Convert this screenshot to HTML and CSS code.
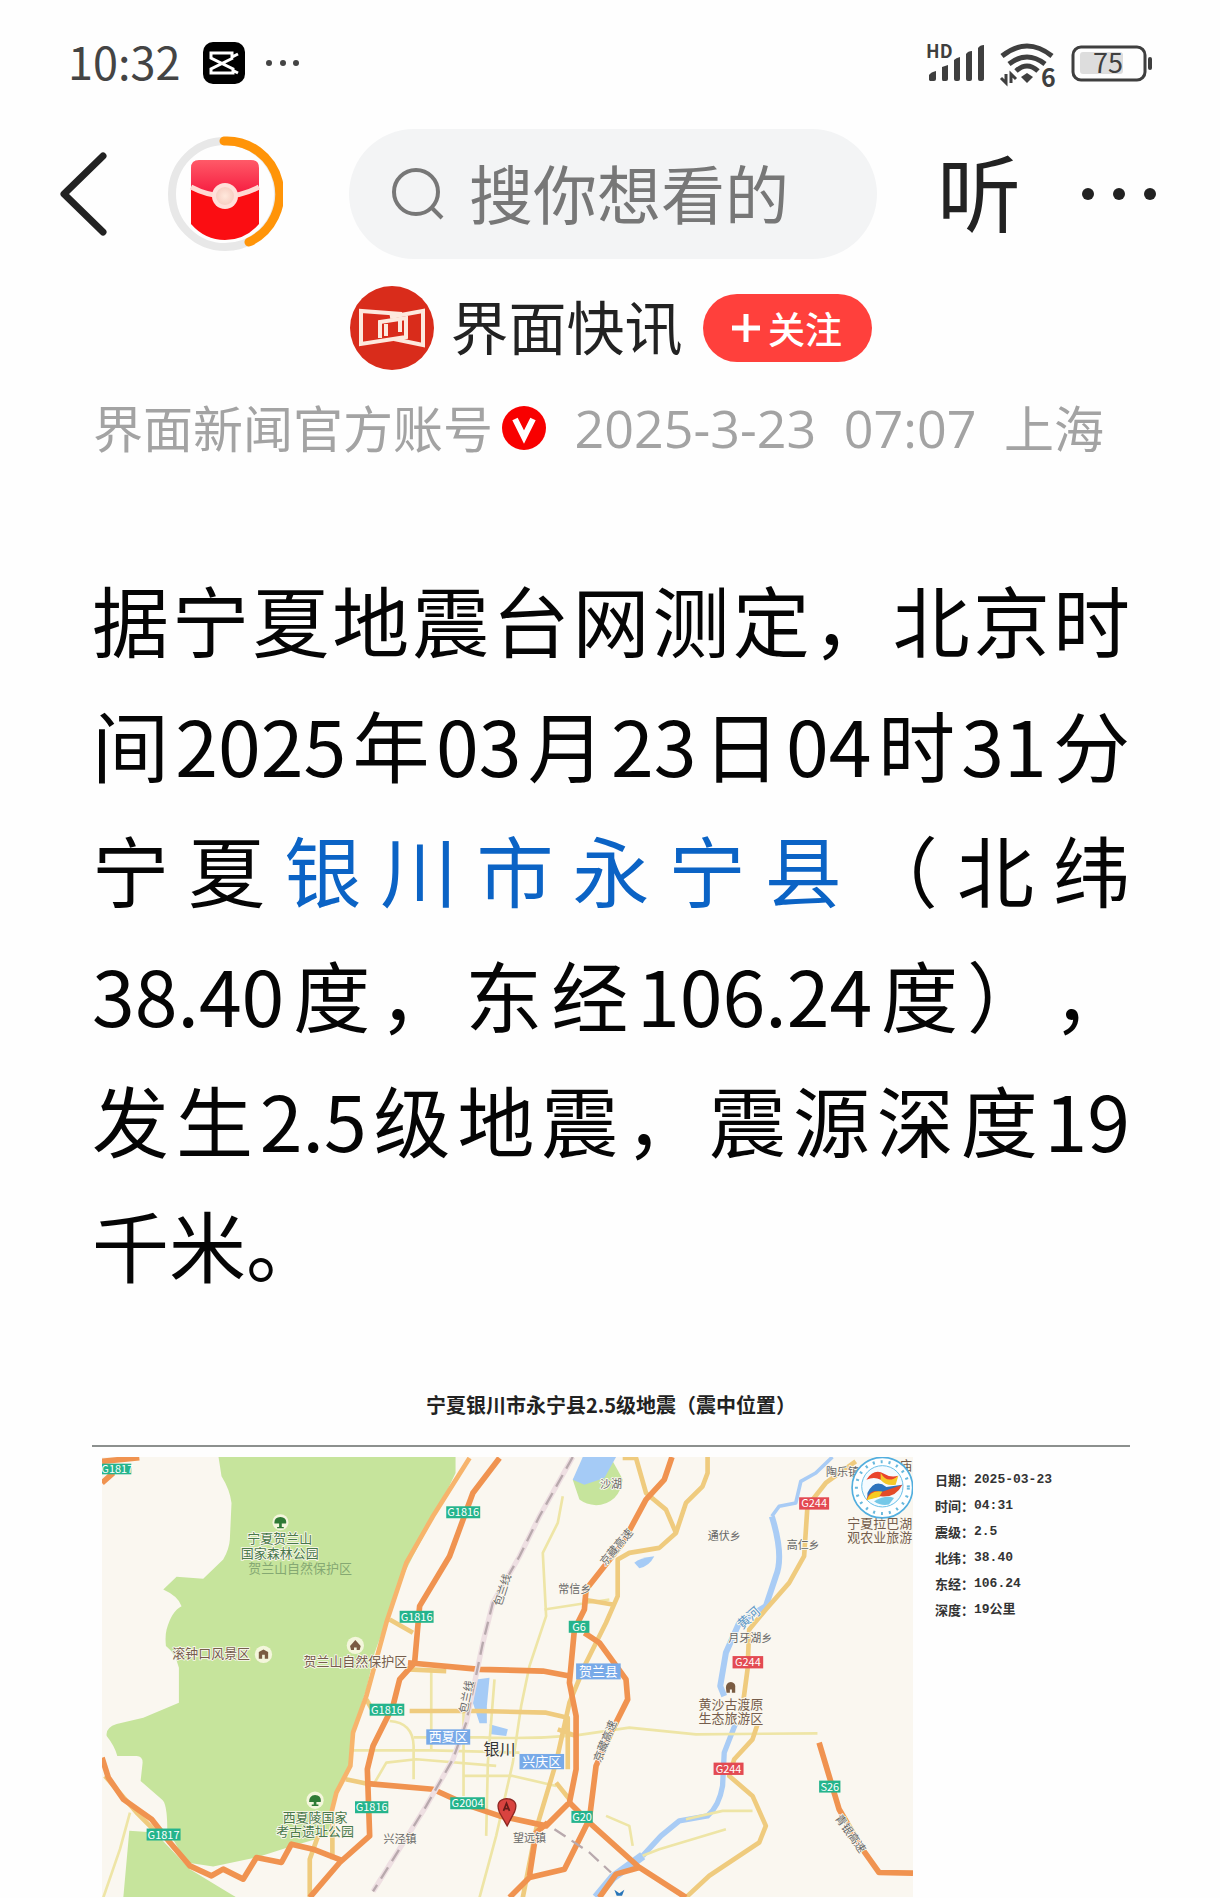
FILE: index.html
```html
<!DOCTYPE html>
<html lang="zh-CN">
<head>
<meta charset="utf-8">
<meta name="viewport" content="width=device-width, initial-scale=1">
<title>界面快讯</title>
<link rel="stylesheet" href="styles.css">
</head>
<body>
<div class="status">
  <span class="clock">10:32</span>
  <svg class="app" viewBox="0 0 42 42" aria-hidden="true"><rect width="42" height="42" rx="10"/><path d="M35 12 L29 15 V11 H8 V16 L30 27 V31 H8 V27 L30 16 M29 28 L35 31" fill="none" stroke="#fff" stroke-width="3"/></svg>
  <svg class="more-small" viewBox="0 0 36 8" aria-hidden="true"><circle cx="4" cy="4" r="3"/><circle cx="18" cy="4" r="3"/><circle cx="31" cy="4" r="3"/></svg>
  <svg class="signals" viewBox="0 0 228 54" role="img" aria-label="信号与电量">
    <g fill="#3f3f3f">
      <text x="1" y="22" font-size="18" font-weight="700">HD</text>
      <path d="M4 44V39Q6 36 11 35V43Q11 45 9 45H5ZM17 31L23 29V43Q23 45 21 45H18Q17 45 17 43ZM29 24Q31 22 35 21V43Q35 45 33 45H31Q29 45 29 43ZM41 18Q43 15 47 15V43Q47 45 45 45H43Q41 45 41 43ZM53 12Q55 9 59 9V43Q59 45 57 45H55Q53 45 53 43Z"/>
      <path d="M102 37L108 41 102 47 96 41Z"/>
      <path d="M81 38V47L76 42M86 47V38L91 43" fill="none" stroke="#3f3f3f" stroke-width="3"/>
      <g fill="none" stroke="#3f3f3f" stroke-width="5"><path d="M77 20Q102 0 127 20"/><path d="M84 28Q102 14 120 28"/><path d="M91 35Q102 25 113 35"/></g>
      <text x="116" y="51" font-size="25" font-weight="700">6</text>
      <rect x="148" y="11" width="72" height="33" rx="8" fill="none" stroke="#3f3f3f" stroke-width="3"/>
      <rect x="155" y="16" width="43" height="22" rx="3" fill="#ddd"/>
      <text x="183" y="37" font-size="27" text-anchor="middle">75</text>
      <rect x="223" y="21" width="4" height="13" rx="2"/>
    </g>
  </svg>
</div>

<header class="nav">
  <button class="back" aria-label="返回"><svg viewBox="0 0 48 84"><path d="M44 4L5 42 44 80" fill="none" stroke="#222" stroke-width="7" stroke-linecap="round" stroke-linejoin="round"/></svg></button>
  <button class="packet" aria-label="红包"><svg viewBox="0 0 116 116">
    <defs>
      <linearGradient id="flap" x1="0" y1="0" x2="0" y2="1"><stop offset="0" stop-color="#ff5a68"/><stop offset="1" stop-color="#f5163c"/></linearGradient>
      <radialGradient id="seal"><stop offset="0" stop-color="#ffe8dc"/><stop offset="1" stop-color="#f7d0c4"/></radialGradient>
    </defs>
    <circle cx="58" cy="58" r="53" fill="none" stroke="#e8e8e8" stroke-width="8"/>
    <path d="M57 5A53 53 0 0 1 82 106" fill="none" stroke="#ff9408" stroke-width="9" stroke-linecap="round"/>
    <path d="M24 50H92V88Q78 104 58 104T24 88Z" fill="#fb0d12"/>
    <path d="M24 54V32Q24 24 32 24H84Q92 24 92 32V54Q58 68 24 54Z" fill="url(#flap)"/>
    <path d="M24 51Q58 69 92 51" fill="none" stroke="#ffd9d2" stroke-width="5"/>
    <circle cx="58" cy="60" r="13" fill="#ffe0da"/><circle cx="58" cy="60" r="9" fill="url(#seal)"/>
  </svg></button>
  <label class="search">
    <svg viewBox="0 0 54 54" aria-hidden="true"><circle cx="25" cy="25" r="22" fill="none" stroke="#777" stroke-width="4"/><path d="M40 40L51 51" stroke="#777" stroke-width="4"/></svg>
    <input type="text" placeholder="搜你想看的" aria-label="搜索">
  </label>
  <button class="listen">听</button>
  <button class="more" aria-label="更多"><svg viewBox="0 0 76 14"><circle cx="7" cy="7" r="6"/><circle cx="38" cy="7" r="6"/><circle cx="69" cy="7" r="6"/></svg></button>
</header>

<main>
  <div class="author">
    <svg class="avatar" viewBox="0 0 84 84" role="img" aria-label="界面"><circle cx="42" cy="42" r="42" fill="#d92c1b"/>
      <g fill="none" stroke="#fde9de" stroke-width="4"><path d="M52 28L11 25V58L56 51V32L30 36V52"/><path d="M40 31L73 25V59L44 53M36 50V38M50 34V46"/></g></svg>
    <span class="name">界面快讯</span>
    <button class="follow"><svg viewBox="0 0 28 28" aria-hidden="true"><path d="M14 0V28M0 14H28" stroke="#fff" stroke-width="5"/></svg><span>关注</span></button>
  </div>
  <div class="meta">
    <span class="account"><span>界面新闻官方账号</span><svg viewBox="0 0 46 46" role="img" aria-label="认证"><circle cx="23" cy="23" r="22" fill="#f80000"/><path d="M14 14L23 32 32 14" fill="none" stroke="#fff" stroke-width="6"/></svg></span>
    <span class="num">2025-3-23</span><span class="num">07:07</span><span>上海</span>
  </div>

  <p class="story">据宁夏地震台网测定，北京时间2025年03月23日04时31分宁夏<a href="#map">银川市永宁县</a>（北纬38.40度，东经106.24度），发生2.5级地震，震源深度19千米。</p>

  <figure id="map">
    <figcaption>宁夏银川市永宁县2.5级地震（震中位置）</figcaption>
    <div class="panel">
      <svg class="chart" viewBox="66 262 2436 1323" role="img" aria-label="震中位置地图">
        <rect x="66" y="262" width="2436" height="1323" fill="#faf7f0"/>
        <g fill="#c6e49c">
          <path d="M416 262H1128V310L1080 410 1000 560 950 660 925 740 885 850 860 960 820 1080 812 1180 770 1270 755 1340 745 1400 640 1430 530 1465 400 1492 320 1480 262 1380Q262 1300 245 1290L182 1235 188 1180Q188 1160 170 1160H112Q104 1130 80 1100 76 1075 110 1064L190 1045 297 1000 297 895Q285 850 258 830 255 800 260 780 275 725 305 710 295 680 250 660L290 622 370 628 430 570Q448 540 450 510L455 400Q450 360 425 320Z"/>
          <path d="M148 1385L225 1390 330 1500 440 1567 470 1585H130Z"/>
          <path d="M1480 330L1510 290 1600 275Q1620 310 1630 330 1625 365 1605 385 1580 407 1550 407 1520 405 1500 390Z"/>
        </g>
        <g fill="#a5cbf6">
          <path d="M1510 262H1610L1575 325 1515 345 1480 330Z"/>
          <path d="M1190 930L1230 925 1222 1010 1222 1062H1200L1180 1000ZM1230 1065L1285 1080 1280 1100 1235 1095Z"/>
          <path d="M1665 580Q1680 565 1725 560 1710 590 1680 596Z"/>
        </g>
        <g class="water">
          <path d="M2260 262L2210 310 2165 335 2150 400 2100 410 2078 440" stroke-width="11"/>
          <path d="M2078 440Q2115 560 2090 620L2060 710 1980 760 1940 850 1923 950 1935 980" stroke-width="18"/>
          <path d="M1970 1060L1935 1150 1930 1250Q1920 1310 1885 1340L1800 1355 1745 1400 1690 1460" stroke-width="16"/>
          <path d="M1690 1460L1600 1525 1550 1585" stroke-width="26"/>
        </g>
        <g class="lane">
          <path d="M1450 380L1435 460 1390 550 1400 740 1350 890 1325 1010 1300 1180 1250 1400 1200 1585"/>
          <path d="M1055 900V1145M1245 930L1225 1180 1220 1400M1152 1030V1280M1002 1104H1210Q1350 1110 1490 1098L1650 1075 1850 1095 2215 1092"/>
          <path d="M820 1143H1060L1320 1150M1395 720L1590 690M1150 1220L1300 1220 1430 1250M1940 1380L1740 1440 1690 1460M1820 1350L1930 1325H2020M150 1330L120 1440 70 1585M885 1240L920 1180 1010 1170 1250 1190M930 1055Q1000 1060 1002 1130V1230M1580 1340L1650 1370 1660 1430"/>
        </g>
        <g class="road">
          <path d="M1885 262V310L1870 350 1820 400 1790 490 1740 535 1650 550 1615 570V680L1580 760 1520 880 1470 1000 1430 1180 1370 1380 1330 1585"/>
          <path d="M1630 265H1670L1700 370 1760 420 1790 490M1510 690L1600 705"/>
          <path d="M2330 275L2240 340 2185 410 2175 560 2130 640 2060 720 2010 780 2005 900 1993 990M2035 1065L2020 1110 1965 1170 1950 1220 2020 1280 2060 1370 2040 1420 1890 1520 1820 1585"/>
          <path d="M930 750L1000 790M990 1025H1200L1400 1030 1465 1045V1200M1435 1080L1490 1100M985 900L1100 905M860 990L880 1025M798 1230L870 1245M758 1340V1470M715 1400L690 1470V1585M75 1220L170 1330 230 1390M1430 1240L1470 1290"/>
          <path d="M1170 265L1060 440 980 580 920 760 860 980 820 1090 812 1190 770 1270 750 1350" stroke="#f7b46c"/>
        </g>
        <g class="highway">
          <path d="M1260 265L1180 370 1110 560 1020 710 1005 880 960 930 940 1010 880 1130 863 1200 870 1400 780 1480 690 1585"/>
          <path d="M66 1165L85 1225 130 1290 215 1350 270 1420 330 1490 395 1520 430 1500 490 1530 530 1465 605 1480 635 1425 700 1440 790 1475"/>
          <path d="M985 880L1200 900 1390 905 1470 920M865 1243L1060 1260 1170 1310 1260 1340 1400 1370 1470 1300 1490 1200 1490 1040 1470 940 1485 780 1515 720 1520 660 1630 520 1700 390 1755 330 1778 262"/>
          <path d="M1515 790L1560 820 1640 930 1645 990 1600 1080 1550 1190 1530 1350 1455 1500 1350 1525 1290 1585M1470 1300L1530 1360 1680 1495 1820 1585M1680 1495L1610 1515 1560 1585M1405 1360L1370 1390 1350 1520"/>
          <path d="M66 340L100 310M66 275L178 264M2220 1120L2280 1320 2350 1440 2400 1510 2502 1512"/>
        </g>
        <path d="M1480 262L1380 440 1320 560 1240 700 1210 820 1160 1060 1120 1170 1040 1310 880 1567" fill="none" stroke="#eedfe2" stroke-width="16"/>
        <path class="rail" d="M1480 262L1380 440 1320 560 1240 700 1210 820 1160 1060 1120 1170 1040 1310 880 1567M1425 1380L1530 1450 1595 1510"/>

        <g class="shield green">
          <rect x="66" y="282" width="88" height="32"/><text x="112" y="309">G1817</text>
          <rect x="1100" y="410" width="102" height="36"/><text x="1151" y="440">G1816</text>
          <rect x="960" y="724" width="102" height="36"/><text x="1011" y="754">G1816</text>
          <rect x="870" y="1003" width="104" height="36"/><text x="922" y="1033">G1816</text>
          <rect x="826" y="1296" width="100" height="36"/><text x="876" y="1326">G1816</text>
          <rect x="200" y="1378" width="102" height="36"/><text x="251" y="1408">G1817</text>
          <rect x="1112" y="1284" width="104" height="36"/><text x="1164" y="1314">G2004</text>
          <rect x="1468" y="754" width="62" height="36"/><text x="1499" y="784">G6</text>
          <rect x="1476" y="1325" width="64" height="36"/><text x="1508" y="1355">G20</text>
          <rect x="2220" y="1234" width="64" height="36"/><text x="2252" y="1264">S26</text>
        </g>
        <g class="shield red">
          <rect x="2160" y="383" width="90" height="37"/><text x="2205" y="413">G244</text>
          <rect x="1960" y="860" width="92" height="37"/><text x="2006" y="890">G244</text>
          <rect x="1903" y="1180" width="90" height="37"/><text x="1948" y="1210">G244</text>
        </g>
        <g class="shield blue">
          <rect x="1040" y="1080" width="132" height="46"/><text x="1106" y="1116">西夏区</text>
          <rect x="1490" y="882" width="134" height="48"/><text x="1557" y="919">贺兰县</text>
          <rect x="1320" y="1154" width="134" height="46"/><text x="1387" y="1190">兴庆区</text>
        </g>

        <g class="spot">
          <circle cx="602" cy="458" r="24"/><circle cx="706" cy="1293" r="26"/><circle cx="551" cy="855" r="26"/><circle cx="827" cy="828" r="26"/>
        </g>
        <g fill="#2f7a35">
          <path d="M584 462Q582 443 602 442 622 443 619 462H606V472H612V476H592V472H598V462ZM688 1298Q688 1278 706 1277 726 1278 723 1298H710V1306H716V1310H696V1306H702V1298Z"/>
        </g>
        <path fill="#7a5c42" d="M537 868V848L551 840 565 848V868H555V856H547V868ZM811 830L827 812 843 830 840 842H831V834H823V842H814ZM1940 955Q1940 940 1955 938 1970 940 1968 955V970H1958V960H1952V970H1942Z"/>

        <g class="label forest">
          <text x="600" y="521">宁夏贺兰山</text><text x="600" y="565">国家森林公园</text>
          <text class="faint" x="661" y="611">贺兰山自然保护区</text>
          <text x="706" y="1357">西夏陵国家</text><text x="706" y="1399">考古遗址公园</text>
        </g>
        <g class="label scenic">
          <text x="394" y="866">滚钟口风景区</text><text x="827" y="891">贺兰山自然保护区</text>
          <text x="1955" y="1018">黄沙古渡原</text><text x="1955" y="1060">生态旅游区</text>
          <text x="2402" y="474">宁夏拉巴湖</text><text x="2402" y="516">观农业旅游</text><text x="2480" y="300">庙</text>
        </g>
        <g class="label town">
          <text x="1595" y="355">沙湖</text><text x="1486" y="671">常信乡</text><text x="1935" y="511">通伏乡</text>
          <text x="2172" y="537">高仁乡</text><text x="2290" y="318">陶乐镇</text><text x="2013" y="819">月牙湖乡</text>
          <text x="961" y="1422">兴泾镇</text><text x="1350" y="1418">望远镇</text>
          <text transform="translate(1620 540) rotate(-50)">京藏高速</text>
          <text transform="translate(1588 1120) rotate(-68)">京藏高速</text>
          <text transform="translate(2305 1400) rotate(55)">青银高速</text>
          <text transform="translate(1280 665) rotate(-72)">包兰线</text>
          <text transform="translate(1172 985) rotate(-78)">包兰线</text>
          <text class="river" transform="translate(2018 755) rotate(-42)">黄河</text>
          <text class="city" x="1260" y="1158">银川</text>
        </g>

        <path d="M1283 1370L1260 1330Q1245 1292 1281 1288 1320 1292 1305 1328Z" fill="#d9433f" stroke="#8d2723" stroke-width="4"/>
        <path d="M1272 1325L1281 1302 1290 1325M1275 1318H1287" fill="none" stroke="#641b18" stroke-width="5"/>
        <path d="M1605 1562L1620 1572 1635 1562 1628 1580H1612Z" fill="#2875b8"/>

        <circle cx="2410" cy="354" r="91" fill="#fff" stroke="#52aede" stroke-width="5"/>
        <circle cx="2410" cy="354" r="78" fill="none" stroke="#69b9dd" stroke-width="9" stroke-dasharray="6 18"/>
        <circle cx="2410" cy="350" r="62" fill="#f5fbff" stroke="#68bfe8" stroke-width="3"/>
        <path d="M2362 330Q2385 295 2415 312 2435 325 2458 318 2430 350 2405 330 2385 320 2362 330Z" fill="#e9432c"/>
        <path d="M2405 310Q2425 345 2458 318L2450 345Q2420 350 2405 330Z" fill="#f5c928"/>
        <path d="M2365 370Q2388 325 2422 352L2470 345Q2430 385 2400 370L2365 390Z" fill="#2c73bd"/>
        <path d="M2362 390Q2375 355 2405 368L2470 345Q2450 385 2405 380Z" fill="#e34b29"/>
        <path d="M2362 392Q2375 360 2410 366L2400 382Z" fill="#f7cb22"/>
        <path d="M2385 395Q2420 375 2445 385L2430 405Q2405 410 2385 395Z" fill="#75c8e8"/>
      </svg>
      <dl class="facts">
        <div><dt>日期：</dt><dd>2025-03-23</dd></div>
        <div><dt>时间：</dt><dd>04:31</dd></div>
        <div><dt>震级：</dt><dd>2.5</dd></div>
        <div><dt>北纬：</dt><dd>38.40</dd></div>
        <div><dt>东经：</dt><dd>106.24</dd></div>
        <div><dt>深度：</dt><dd>19公里</dd></div>
      </dl>
    </div>
  </figure>
</main>
</body>
</html>
```
FILE: styles.css
```css
* { box-sizing: border-box; }

body {
  margin: 0;
  background: #fefefe;
  color: #111;
  font-family: "Noto Sans CJK SC", sans-serif;
  text-spacing-trim: space-all;
}

svg { display: block; }

button {
  padding: 0;
  border: 0;
  background: none;
  color: inherit;
  font: inherit;
}

/* status bar */
.status {
  display: flex;
  align-items: center;
  height: 54px;
  margin-top: 36px;
  padding: 0 67px 0 68px;
}

.clock {
  width: 135px;
  padding-bottom: 4px;
  color: #444;
  font-size: 45px;
  line-height: 50px;
}

.app { width: 42px; height: 42px; }
.more-small { width: 36px; height: 8px; margin-left: 20px; fill: #444; }
.signals { width: 228px; height: 54px; margin-left: auto; overflow: visible; }

/* navigation */
.nav {
  display: flex;
  align-items: center;
  gap: 60px;
  margin-top: 39px;
  padding: 0 63px 0 59px;
}

.back svg { width: 48px; height: 84px; }
.packet svg { width: 116px; height: 116px; }

.search {
  display: flex;
  flex: 1;
  align-items: center;
  gap: 24px;
  min-width: 0;
  height: 130px;
  margin-left: 6px;
  padding: 0 42px;
  border-radius: 65px;
  background: #f3f4f5;
}

.search svg { flex: none; width: 54px; height: 54px; }

.search input {
  flex: 1;
  min-width: 0;
  padding: 0 0 6px;
  border: 0;
  outline: 0;
  background: none;
  color: #222;
  font: 64px/90px "Noto Sans CJK SC", sans-serif;
}

.search input::placeholder { color: #777; opacity: 1; }

.listen { padding-bottom: 8px; color: #222; font-size: 84px; line-height: 90px; }
.more svg { width: 76px; height: 14px; fill: #222; }

/* article */
main { padding: 0 90px 0 92px; }

.author {
  display: flex;
  align-items: center;
  justify-content: center;
  margin-top: 27px;
}

.avatar { width: 84px; height: 84px; }

.name {
  margin: 0 20px 0 16px;
  padding-bottom: 6px;
  color: #222;
  font-size: 58px;
  line-height: 78px;
}

.follow {
  display: flex;
  align-items: center;
  justify-content: center;
  gap: 8px;
  width: 169px;
  height: 68px;
  border-radius: 34px;
  background: #ff403c;
  color: #fff;
  font-size: 37px;
  font-weight: 500;
}

.follow svg { width: 28px; height: 28px; }

.meta {
  display: flex;
  align-items: center;
  justify-content: space-between;
  margin-top: 26px;
  padding: 0 26px 0 1px;
  color: #a3a3a3;
  font-size: 50px;
  line-height: 60px;
  white-space: nowrap;
}

.meta > span:last-child,
.account span { padding-bottom: 4px; }
.account { display: flex; align-items: center; gap: 8px; }
.account svg { width: 46px; height: 46px; }
.num { font-family: "Open Sans", sans-serif; font-size: 52px; }

.story {
  margin: 96px 0 0;
  color: #050505;
  font-size: 77px;
  line-height: 125px;
  text-align: justify;
}

.story a { color: #0b63c5; text-decoration: none; }

/* map */
figure { margin: 84px 0 0; }

figcaption {
  padding-bottom: 25px;
  border-bottom: 2px solid #8c908e;
  color: #222;
  font-size: 20px;
  font-weight: 700;
  line-height: 30px;
  text-align: center;
}

.panel {
  display: grid;
  grid-template-columns: minmax(0, 1fr) 195px;
  gap: 22px;
  padding: 10px 0 0 10px;
}

.chart { width: 100%; }

.water, .lane, .road, .highway, .rail { fill: none; stroke-linejoin: round; }
.water { stroke: #a9ccf5; }
.lane { stroke: #eee5a6; stroke-width: 8; }
.road { stroke: #efcb7e; stroke-width: 14; }
.highway { stroke: #f09350; stroke-width: 17; }
.rail { stroke: #b8a9ad; stroke-width: 7; stroke-dasharray: 40 22; }

.shield text { fill: #fff; font-size: 33px; text-anchor: middle; }
.green { fill: #25b48c; }
.red { fill: #e34a52; }
.blue { fill: #78aae8; }
.blue text { font-size: 39px; }

.spot { fill: #f4f6dc; }
.label { font-size: 39px; text-anchor: middle; paint-order: stroke; stroke: #fbf8ef; stroke-width: 5px; }
.forest { fill: #48774a; }
.faint { fill: #85a873; stroke: none; }
.scenic { fill: #755d4c; }
.town { fill: #666; font-size: 33px; }
.river { fill: #5c97c9; font-size: 39px; }
.city { fill: #333; font-size: 48px; }

.facts {
  margin: 10px 0 0;
  color: #333;
  font-size: 13px;
  font-weight: 700;
  line-height: 26px;
}

.facts div { display: flex; }
.facts dt { flex: none; }
.facts dd { margin: 0; font-family: "Liberation Mono", "Noto Sans CJK SC", monospace; }
```
